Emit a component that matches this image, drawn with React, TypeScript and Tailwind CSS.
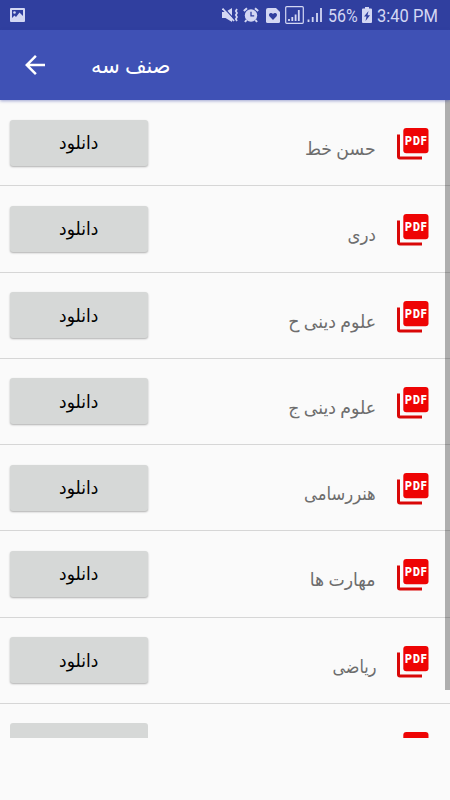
import { MdArrowBack } from 'react-icons/md'

const books = [
  { title: 'حسن خط', scale: 'scale-x-[0.96]' },
  { title: 'دری', scale: 'scale-x-[0.92]' },
  { title: 'علوم دینی ح', scale: 'scale-x-[0.965]' },
  { title: 'علوم دینی ج', scale: 'scale-x-[0.965]' },
  { title: 'هنررسامی', scale: 'scale-x-[0.91]' },
  { title: 'مهارت ها', scale: 'scale-x-[0.96]' },
  { title: 'ریاضی', scale: 'scale-x-[0.89]' },
]

function StatusBar() {
  return (
    <div className="flex h-[30px] shrink-0 items-center bg-[#303f9f] pl-[10px] pr-[12px] text-[#d3d7f3]">
      {/* picture */}
      <svg width="15" height="14" viewBox="0 0 15 14">
        <rect width="15" height="14" rx="1" fill="currentColor" />
        <path fill="#303f9f" d="M2 2h11v6L9.500 4.500 6 9 4.500 7.500 2 10z" />
        <circle cx="4.500" cy="4.500" r="1.300" fill="currentColor" />
      </svg>
      <div className="flex-1"></div>

      {/* muted + vibration */}
      <svg width="17" height="16" viewBox="0 0 17 16">
        <path fill="currentColor" d="M0 5h3.500L10 1v14l-6.500-4H0z" />
        <path fill="none" stroke="#303f9f" strokeWidth="1.200" d="M2 1l10 11" />
        <path fill="none" stroke="currentColor" strokeWidth="1.800" d="M.5 1.500L12 14" />
        <path fill="none" stroke="currentColor" strokeWidth="1.700" d="M15 2l-1.200 2L15 6l-1.200 2L15 10l-1.200 2L15 14" />
      </svg>
      {/* alarm */}
      <svg className="ml-[4px]" width="16" height="16" viewBox="0 0 16 16">
        <path fill="none" stroke="currentColor" strokeWidth="2" d="M.8 4L4 1.200M15.200 4L12 1.200M3.500 13L2 15M12.500 13l1.500 2" />
        <circle cx="8" cy="8.500" r="6.200" fill="currentColor" />
        <path fill="none" stroke="#303f9f" strokeWidth="1.300" d="M8 4.800v4h3.200" />
      </svg>

      {/* card with heart */}
      <svg className="ml-[7px]" width="14" height="15" viewBox="0 0 14 15">
        <path fill="currentColor" d="M2 0h8l4 4v9.500q0 1.500-1.500 1.500h-11Q0 15 0 13.500V2Q0 0 2 0z" />
        <path fill="#303f9f" d="M7 12L3.400 8.200C1.800 6 5 3.800 7 6c2-2.200 5.200 0 3.600 2.200z" />
      </svg>

      {/* signal bars */}
      <svg className="ml-[5px]" width="19" height="18" viewBox="0 0 19 18" fill="none" stroke="currentColor">
        <rect x=".7" y=".7" width="17.6" height="16.600" rx="1" strokeWidth="1.2" />
        <path strokeWidth="1.8" d="M4 15v-2M7.300 15v-4M10.600 15V8.500M13.800 15V4" />
      </svg>
      <svg className="ml-[3px]" width="16" height="16" viewBox="0 0 16 16" fill="none" stroke="currentColor" strokeWidth="1.800">
        <path d="M1.500 15v-2.500M5.700 15v-5M10 15V6M14 15V1" />
      </svg>

      <span className="ml-[5px] w-[31px] whitespace-nowrap text-[19px] leading-none">
        <span className="inline-block origin-left scale-x-[0.84]">56%</span>
      </span>
      <svg className="ml-[3px]" width="10" height="16" viewBox="0 0 10 16">
        <path fill="currentColor" d="M3 0h4v1.500h2q1 0 1 1V15q0 1-1 1H1q-1 0-1-1V2.500q0-1 1-1h2z" />
        <path fill="#303f9f" d="M6.500 4L2 9.500h2.500L3.500 14 8 8.300H5.500z" />
      </svg>
      <span className="ml-[5px] w-[61px] whitespace-nowrap text-[19px] leading-none">
        <span className="inline-block origin-left scale-x-[0.87]">3:40 PM</span>
      </span>
    </div>
  )
}

function PdfIcon({ label = true }: { label?: boolean }) {
  return (
    <svg className="mt-[28px] shrink-0" width="32" height="32" viewBox="0 0 32 32">
      <path fill="#d90707" d="M0 6.500h3V28.500h22v3H3q-3 0-3-3z" />
      <rect x="6.300" width="25.200" height="25.200" rx="3" fill="#ee0404" />
      {label && (
        <text x="8" y="17" letterSpacing="1" fontSize="12" fontWeight="900" fill="#fff" textLength="22.500" lengthAdjust="spacingAndGlyphs">PDF</text>
      )}
    </svg>
  )
}

function BookRow({ title, scale }: { title: string; scale: string }) {
  return (
    <div className="flex h-[86.25px] shrink-0 items-start border-b-[1.5px] border-[#d6d6d6] pl-[10px] pr-[21px]">
      <button className="mt-[19.5px] flex h-[46px] w-[138px] items-center justify-center rounded-[3px] bg-[#d6d8d7] text-[18px] text-black shadow-[0_1px_2px_rgba(0,0,0,0.3)]">
        <span className="-translate-y-[0.5px] scale-x-[0.95]">دانلود</span>
      </button>
      <p className="mt-[34px] flex-1 pr-[21px] text-right text-[18px] leading-[30px] text-[#6d6d6d]">
        <span className={`inline-block origin-right ${scale}`}>{title}</span>
      </p>
      <PdfIcon />
    </div>
  )
}

export default function App() {
  return (
    <div className="flex h-[800px] w-[450px] flex-col overflow-hidden bg-[#fafafa] font-[Roboto,'DejaVu_Sans',sans-serif]">
      <StatusBar />

      <header className="z-10 flex h-[70px] shrink-0 items-center bg-[#3f51b5] pl-[20px] text-white shadow-[0_1px_3px_rgba(48,63,159,0.45)]">
        <MdArrowBack size={30} />
        <h1 className="ml-[41px] origin-left scale-x-[0.95] text-[22px]" dir="rtl">صنف سه</h1>
      </header>

      {/* Book list */}
      <main className="relative h-[637.5px] shrink-0 overflow-hidden">
        <div className="flex flex-col">
          {books.map((book) => (
            <BookRow key={book.title} title={book.title} scale={book.scale} />
          ))}
          {/* next row, only its top edge is in view */}
          <div className="flex shrink-0 items-start justify-between pl-[10px] pr-[21px]">
            <div className="mt-[19.5px] h-[46px] w-[138px] rounded-[3px] bg-[#d6d8d7]"></div>
            <PdfIcon label={false} />
          </div>
        </div>
        <div className="absolute right-0 top-0 h-[590px] w-[5px] bg-black/30"></div>
      </main>
    </div>
  )
}
